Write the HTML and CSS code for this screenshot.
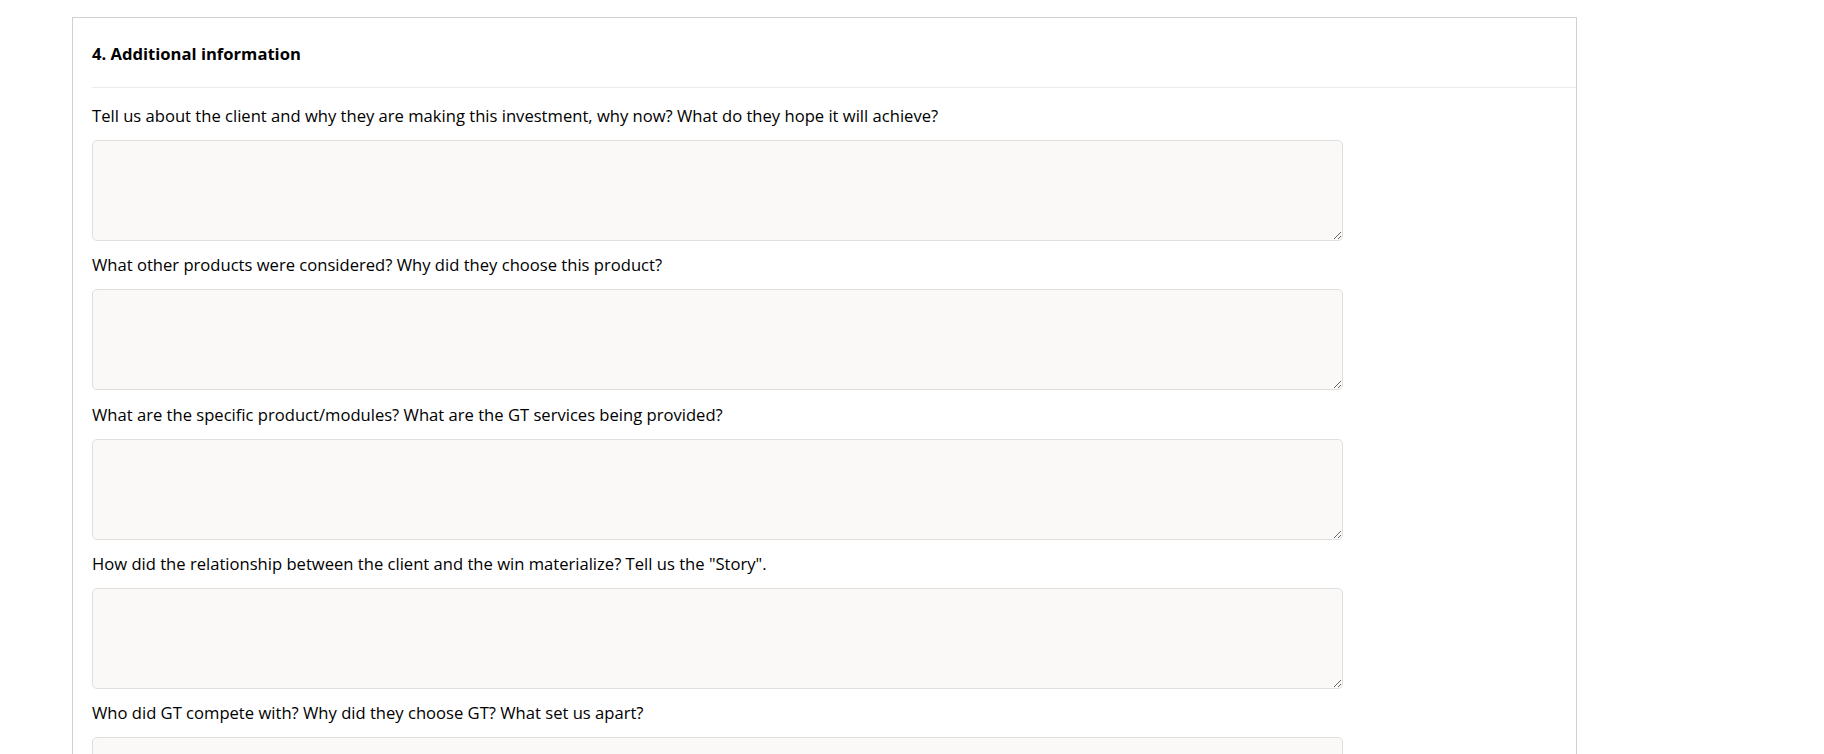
FILE: index.html
```html
<!DOCTYPE html>
<html lang="en">
<head>
<meta charset="utf-8">
<title>Additional information</title>
<link rel="stylesheet" href="styles.css">
</head>
<body>
<div class="page">
  <section class="card">
    <header class="card-header">
      <h2 class="card-title">4. Additional information</h2>
    </header>
    <div class="card-body">
      <div class="field">
        <label class="field-label">Tell us about the client and why they are making this investment, why now? What do they hope it will achieve?</label>
        <textarea class="field-input"></textarea>
      </div>
      <div class="field">
        <label class="field-label">What other products were considered? Why did they choose this product?</label>
        <textarea class="field-input"></textarea>
      </div>
      <div class="field">
        <label class="field-label">What are the specific product/modules? What are the GT services being provided?</label>
        <textarea class="field-input"></textarea>
      </div>
      <div class="field">
        <label class="field-label">How did the relationship between the client and the win materialize? Tell us the "Story".</label>
        <textarea class="field-input"></textarea>
      </div>
      <div class="field">
        <label class="field-label">Who did GT compete with? Why did they choose GT? What set us apart?</label>
        <textarea class="field-input"></textarea>
      </div>
    </div>
  </section>
</div>
</body>
</html>
```

FILE: styles.css
```css
html, body {
  margin: 0;
  padding: 0;
  background: #ffffff;
}
body {
  font-family: "Open Sans", "Noto Sans", sans-serif;
  color: #000000;
}
.page {
  padding: 17px 0 0 72px;
}
.card {
  width: 1505px;
  box-sizing: border-box;
  border: 1px solid #d2d0ce;
  border-bottom: none;
  background: #ffffff;
  padding-left: 19px;
}
.card-header {
  height: 69px;
  border-bottom: 1px solid #edebe9;
  display: flex;
  align-items: center;
}
.card-title {
  margin: 0;
  font-size: 16.6px;
  font-weight: 700;
  line-height: 20px;
  padding-top: 2px;
}
.card-body {
  padding-top: 16px;
}
.field {
  display: flex;
  flex-direction: column;
}
.field-label {
  font-size: 16.6px;
  line-height: 24px;
  margin-bottom: 12px;
}
.field-input {
  width: 1251px;
  height: 101px;
  box-sizing: border-box;
  background: #faf9f8;
  border: 1px solid #e1dfdd;
  border-radius: 5px;
  margin: 0 0 12.25px 0;
  font-family: inherit;
  font-size: 15px;
  padding: 6px 8px;
  outline: none;
}
```
